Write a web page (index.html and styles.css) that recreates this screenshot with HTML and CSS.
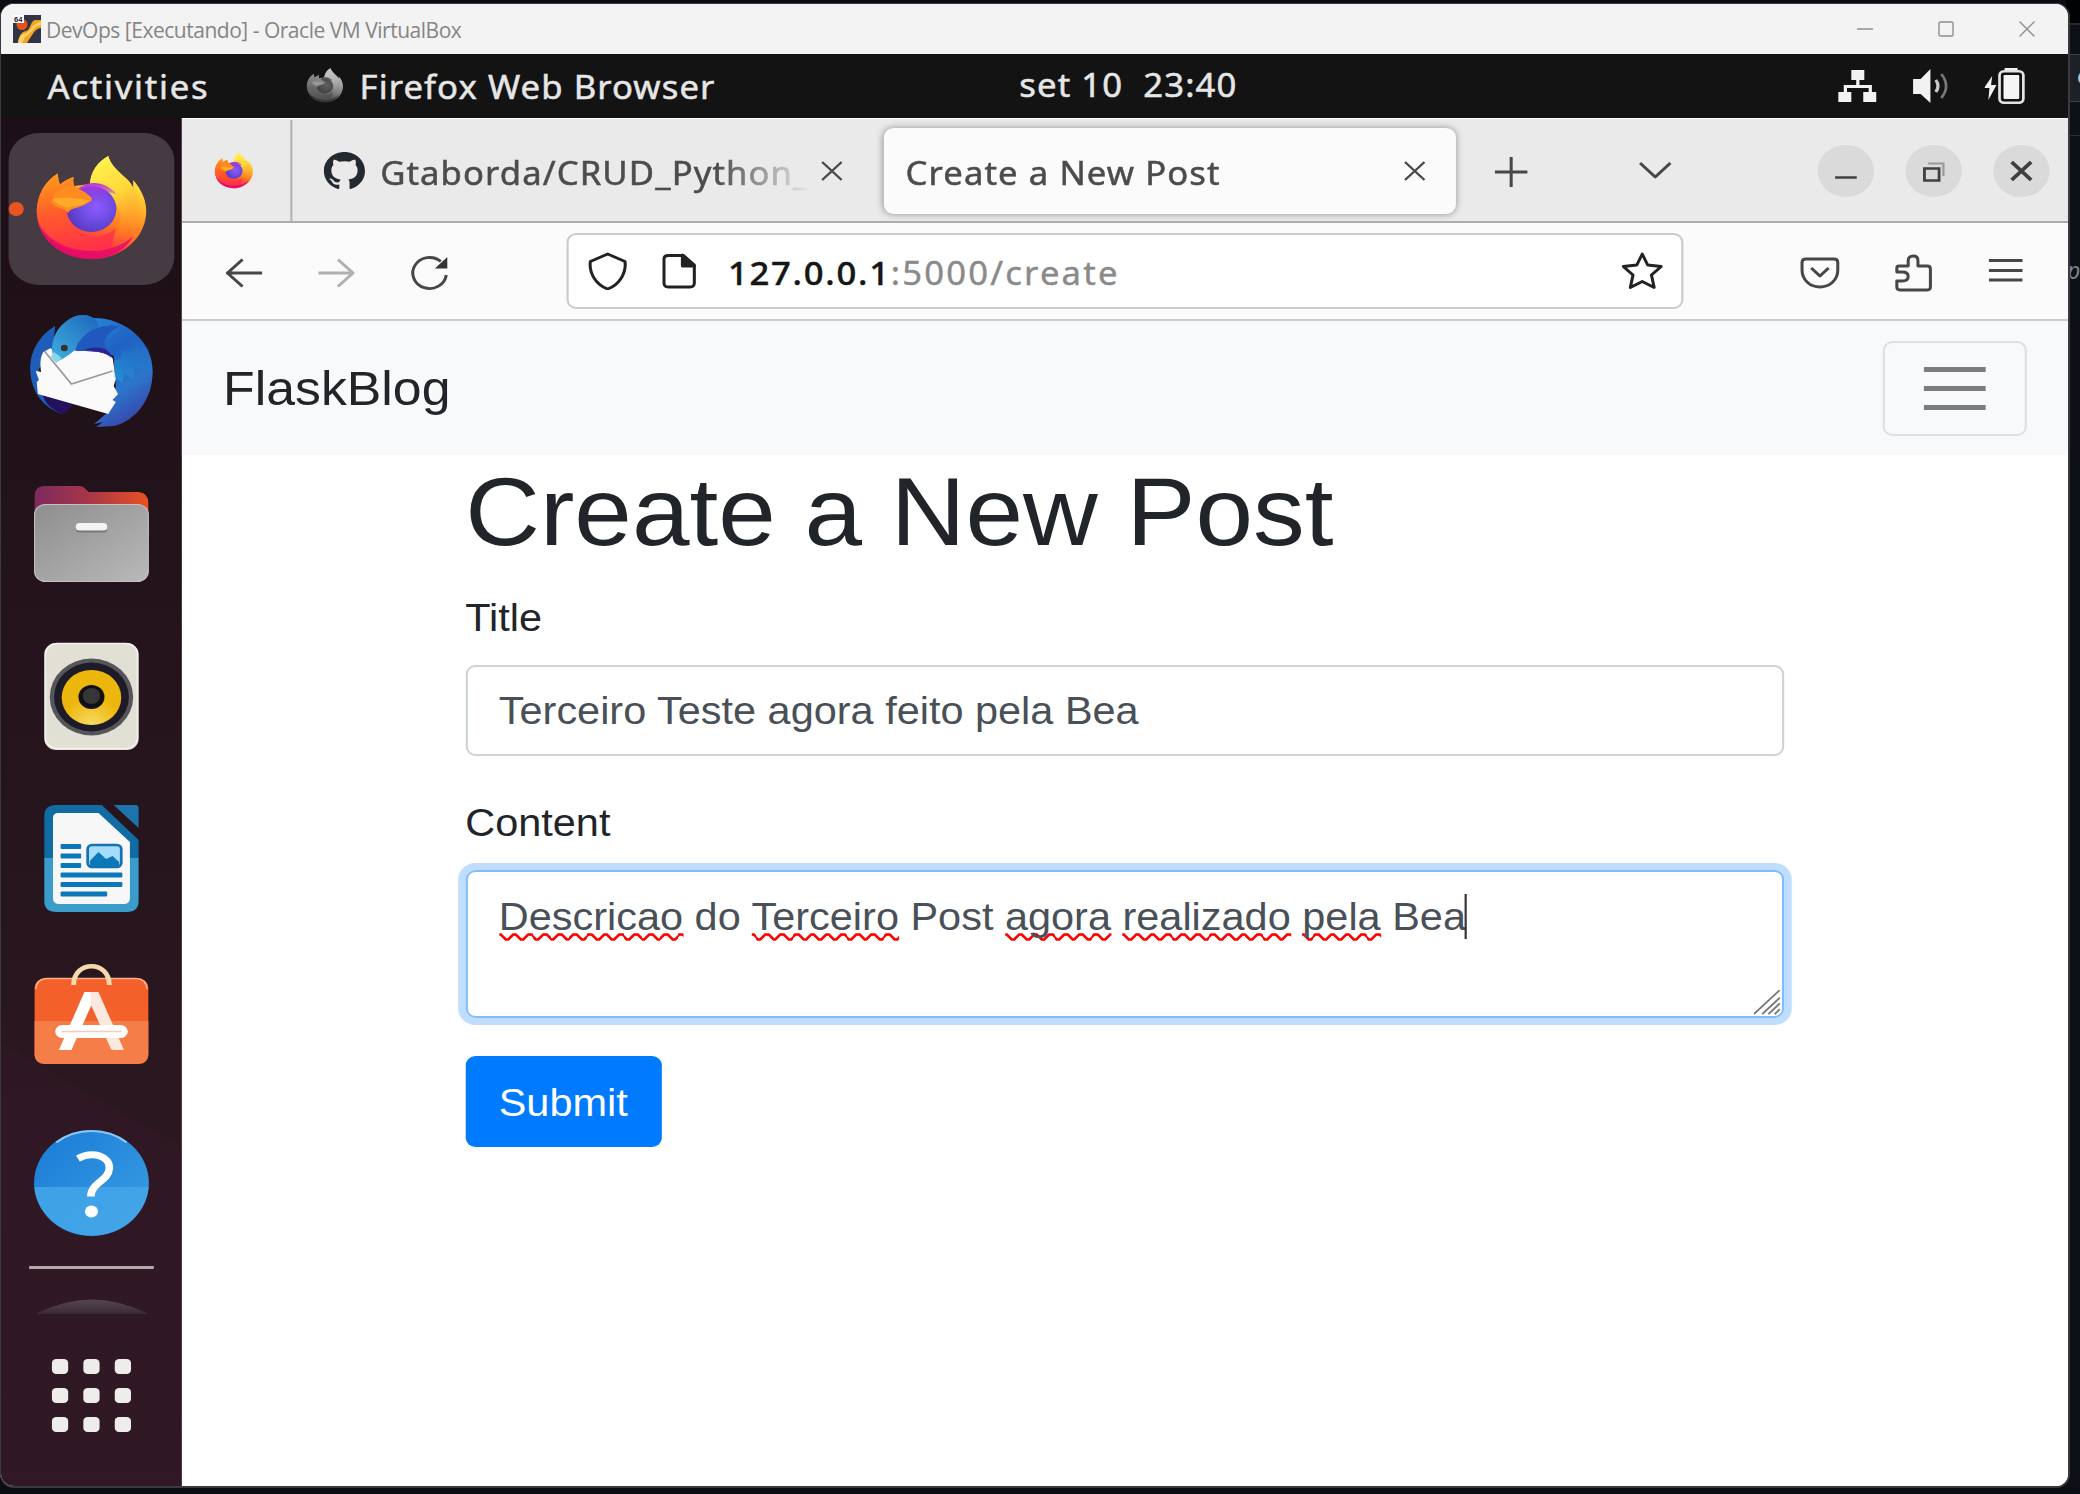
FILE: index.html
```html
<!DOCTYPE html>
<html lang="pt-BR">
<head>
<meta charset="utf-8">
<title>DevOps [Executando] - Oracle VM VirtualBox</title>
<link rel="stylesheet" href="styles.css">
</head>
<body>
<svg class="defs" aria-hidden="true">
  <defs>
    <linearGradient id="fxBody" x1="0.75" y1="0.1" x2="0.35" y2="1"><stop offset="0" stop-color="#fff44f"/><stop offset=".3" stop-color="#ffb52b"/><stop offset=".55" stop-color="#ff7a22"/><stop offset=".78" stop-color="#ff3a45"/><stop offset="1" stop-color="#f0155c"/></linearGradient>
    <linearGradient id="fxLeft" x1="0.3" y1="0" x2="0.5" y2="1"><stop offset="0" stop-color="#ff9a1a"/><stop offset=".5" stop-color="#ff5a2c"/><stop offset="1" stop-color="#ff3148"/></linearGradient>
    <linearGradient id="fxFlame" x1="0.3" y1="0" x2="0.6" y2="1"><stop offset="0" stop-color="#fff44f"/><stop offset=".5" stop-color="#ffd53a"/><stop offset="1" stop-color="#ff8a24" stop-opacity=".1"/></linearGradient>
    <radialGradient id="fxGlobe" cx=".6" cy=".45" r=".65"><stop offset="0" stop-color="#9059ff"/><stop offset=".55" stop-color="#6a4be0"/><stop offset="1" stop-color="#5b34b8"/></radialGradient>
    <linearGradient id="fxGlobeTop" x1="0" y1="0" x2="0" y2="1"><stop offset="0" stop-color="#b833e1"/><stop offset=".6" stop-color="#a13be8" stop-opacity="0"/></linearGradient>
    <symbol id="firefox" viewBox="0 0 115 115">
      <path fill="url(#fxBody)" d="M7 60C7 42 15 29 26.500 21.500C26.500 25 27 29 28.500 32.500C32 29.500 36 26.500 41 25C40.500 28 40.500 31 41.500 34L56 32C57 20 63 10 73 4C75 13 83 20 91 28C93 30 95 33 96 36L96 28C104 38 109 50 108 62C106 88 84 107 58 107C29 107 7 86 7 60Z"/>
      <path fill="#e2066c" opacity=".75" d="M9 73C19 91 36 99 57 99C75 99 88 92 96 84C88 100 74 107 58 107C35 107 15 94 9 73Z"/>
      <path fill="url(#fxLeft)" d="M7 58C8 42 15 29 26.500 21.500C26.500 25 27 29 28.500 32.500C32 29.500 36 26.500 41 25C40.500 28 40.500 31 41.500 34L57 44L57 49C52 56 38 57 37 62L40 76C52 88 70 86 80 76L76 95C70 98 64 99 57 99C30 97 7 82 7 58Z"/>
      <path fill="url(#fxFlame)" d="M56 34C56 20 63 10 73 4C75 13 83 20 91 28C101 40 104 56 98 71C93 81 86 85 78 85C85 76 87 62 79 50C75 42 67 36 56 34Z"/>
      <circle cx="57.500" cy="57" r="23" fill="url(#fxGlobe)"/>
      <path fill="url(#fxGlobeTop)" d="M40 44C48 27 70 27 81 43C77 40 73 40 71 41C77 46 80 54 79 62L42 62Z"/>
      <path fill="#ff8c1e" d="M20 50C26 32 40 29 57 45C59 48 57 50 54 51C49 56 38 55 36 61C34 56 25 57 20 50Z"/>
      <path fill="#ffae2a" opacity=".9" d="M22 47C33 44 45 47 56 48C49 55 40 53 36 56C30 54 25 52 22 47Z"/>
    </symbol>
  </defs>
</svg>

<div class="desktop">
  <aside class="behind"><i class="strip-top"></i><i class="strip-tab"></i><i class="strip-bar"><b></b></i><i class="strip-tools"></i><span>p</span></aside>
  <main class="window">
    <header class="titlebar">
      <svg class="vb-icon" viewBox="0 0 28 28"><rect width="28" height="28" fill="#2f3546"/><path d="M5 28C6 21 8 17 13 16C18 15 17 6 22 5L28 5V13C21 14 20 20 17 23L14 28Z" fill="#f6a21c"/><path d="M5 28C6 22 8 19 13 18C18 17 18 8 28 7L28 10C19 12 18 20 12 22L9 28Z" fill="#ffd36a"/><circle cx="9" cy="9.500" r="5.500" fill="#e5521d"/><rect width="11" height="8" fill="#fff"/><text x="1" y="7" font-size="7.500" font-weight="700" font-family="Liberation Sans, sans-serif" fill="#222">64</text></svg>
      <span class="window-title">DevOps [Executando] - Oracle VM VirtualBox</span>
      <div class="window-buttons">
        <svg viewBox="0 0 16 16"><path d="M0 8H16"/></svg>
        <svg viewBox="0 0 16 16"><rect x="1" y="1" width="14" height="14" rx="1.500"/></svg>
        <svg viewBox="0 0 16 16"><path d="M.5.5L15.500 15.500M15.500.5L.5 15.500"/></svg>
      </div>
    </header>

    <div class="guest-frame"><div class="guest">
      <div class="topbar">
        <span class="activities">Activities</span>
        <svg class="app-icon"><use href="#firefox"/></svg>
        <span class="app-name">Firefox Web Browser</span>
        <span class="clock">set 10&nbsp; 23:40</span>
        <div class="status">
          <svg viewBox="0 0 38 38"><path d="M13 3h12v10h-4.500v5H32v7h4v10H24V25h5v-4H9v4h4v10H1V25h5v-7h11.500v-5H13z" fill="#f2f2f2"/></svg>
          <svg viewBox="0 0 38 38"><path d="M2 12h7L18 2v34L9 27H2z" fill="#f2f2f2"/><path d="M23 13q4 6 0 12" fill="none" stroke="#c8c8c8" stroke-width="3"/><path d="M28 7q9 12 0 24" fill="none" stroke="#777" stroke-width="2.500"/></svg>
          <svg viewBox="0 0 38 38"><path d="M7 9L-.5 21h5l-1 12L11 18H6z" fill="#f2f2f2"/><path d="M18.500 1h12v4h-12z" fill="#f2f2f2"/><rect x="13.800" y="4.300" width="22" height="31.500" rx="4" fill="none" stroke="#e4e4e4" stroke-width="2.500"/><rect x="17.500" y="8" width="14.500" height="24" rx="1" fill="#f5f5f5"/></svg>
        </div>
      </div>

      <div class="workspace">
        <nav class="dock">
          <div class="dock-item active"><svg><use href="#firefox"/></svg></div>
          <div class="dock-item">
            <svg viewBox="0 0 115 115">
              <defs><linearGradient id="tb" x1=".2" y1="0" x2=".8" y2="1"><stop offset="0" stop-color="#2a8fd8"/><stop offset=".4" stop-color="#1f62c4"/><stop offset=".7" stop-color="#2b76cc"/><stop offset="1" stop-color="#3a3fa6"/></linearGradient><linearGradient id="tbh" x1="1" y1="0" x2="0" y2="1"><stop offset="0" stop-color="#1d66bb"/><stop offset="1" stop-color="#3fb0e0"/></linearGradient><linearGradient id="tbf" x1="1" y1="0" x2="0" y2="1"><stop offset="0" stop-color="#2273cc" stop-opacity="0"/><stop offset="1" stop-color="#239bd6" stop-opacity=".8"/></linearGradient></defs>
              <path d="M24 12C8 22 0 40 1 57C2 78 13 94 31 100L12 80L9 55L22 34Z" fill="#1e5db8"/>
              <path d="M12 80L42 87L35 98L31 100C21 96 15 90 12 80Z" fill="#25105e"/>
              <path d="M45 3C30 7 22 18 22 34C36 40 60 32 78 42L80 72L76 95L60 110L68 108L62 113L78 112C98 107 114 86 114 57C114 27 88 3 58 4Q50 2 45 3Z" fill="url(#tb)"/>
              <path d="M13 38C10 44 10 50 11 58L6 57L9 66L7 68L8 80L73 100L80 88L77 86L82 80L78 72L80 65L77 44C70 36 54 38 44 36L24 40L20 34Z" fill="#fafafa"/>
              <path d="M14 37L39 70L77 57" fill="none" stroke="#9a9a9a" stroke-width="1.600"/>
              <path d="M50 1C56 0 70 8 60 17C50 25 44 39 25 48C20 42 19 26 28 14C34 6 42 0 50 1Z" fill="url(#tbh)"/>
              <path d="M20 43L23 38L30 44L25 49Z" fill="#8bd5ea"/><circle cx="32.500" cy="34" r="3.200" fill="#333"/>
              <path d="M43 35C48 18 66 9 84 12C65 22 68 31 76 44C69 36 55 37 43 37Z" fill="#2058bd"/>
              <path d="M50 36C60 32 73 32 77 44C70 37 60 37 50 36Z" fill="#302092"/>
              <path d="M78 47L85 44L86 37L94 38L98 28L102 36L111 31L112 45L104 56L98 52L96 65L88 60L86 69L79 63Z" fill="url(#tbf)"/>
            </svg>
          </div>
          <div class="dock-item">
            <svg viewBox="0 0 115 115">
              <defs><linearGradient id="fl"><stop offset="0" stop-color="#7c2a5e"/><stop offset=".5" stop-color="#a93747"/><stop offset="1" stop-color="#ea5220"/></linearGradient><linearGradient id="fg" x1="0" y1="0" x2="1" y2="1"><stop offset="0" stop-color="#8e8e8e"/><stop offset=".8" stop-color="#b0b0b0"/><stop offset="1" stop-color="#bababa"/></linearGradient></defs>
              <path d="M5 60V20Q5 10 14 10H46Q50 10 52 13L55 16H101Q110 17 110 27V60Z" fill="url(#fl)"/>
              <rect x="5" y="28.500" width="105" height="77" rx="10" fill="url(#fg)" stroke="#c2c2c2" stroke-width="1"/>
              <rect x="43" y="49" width="29" height="7.500" rx="3.500" fill="#777"/><rect x="43" y="47" width="29" height="7.500" rx="3.500" fill="#f4f4f4"/>
            </svg>
          </div>
          <div class="dock-item">
            <svg viewBox="0 0 115 115">
              <defs><radialGradient id="rb" cy="1"><stop offset="0" stop-color="#f9dc64"/><stop offset="1" stop-color="#edb60c"/></radialGradient></defs>
              <rect x="14" y="4" width="87" height="107" rx="11" fill="#e2dfd5"/><rect x="15" y="4.500" width="85" height="105" rx="11" fill="none" stroke="#f3f1ec" stroke-width="1.500"/>
              <circle cx="57.500" cy="58" r="38.500" fill="#56565a"/><circle cx="57.500" cy="58" r="34.500" fill="#1d1b28"/><circle cx="57.500" cy="58.500" r="27.500" fill="url(#rb)"/><circle cx="57.500" cy="58" r="12" fill="#111"/><circle cx="57.500" cy="57" r="8" fill="#363636"/>
            </svg>
          </div>
          <div class="dock-item">
            <svg viewBox="0 0 115 115">
              <path d="M14 58V15Q14 4 25 4H67L101 39V58Z" fill="#116ca3"/><path d="M14 57H101V100Q101 111 90 111H25Q14 111 14 100Z" fill="#3a9ccb"/>
              <path d="M22 17Q22 12 27 12H64L93 41V97Q93 103 87 103H28Q22 103 22 97Z" fill="#f7f7f8"/>
              <path d="M78 4H98Q101 4 101 7V27Z" fill="#1b74ad"/>
              <g fill="#0d78b8"><rect x="29" y="43" width="19" height="5" rx="1"/><rect x="29" y="52.500" width="19" height="5" rx="1"/><rect x="29" y="62" width="19" height="5" rx="1"/><rect x="29" y="71.500" width="57" height="5" rx="1"/><rect x="29" y="81" width="57" height="5" rx="1"/><rect x="29" y="90.500" width="43" height="5" rx="1"/></g>
              <rect x="54" y="44" width="31" height="22" rx="4" fill="#a5dcfa" stroke="#1472ae" stroke-width="2.500"/><path d="M56 64V60L64 51L71 58L77 55L83 61V65H56Z" fill="#0d78b8"/>
            </svg>
          </div>
          <div class="dock-item">
            <svg viewBox="0 0 115 115">
              <rect x="5" y="15" width="105" height="86" rx="10" fill="#f4602a"/><path d="M5 58H110V91Q110 101 100 101H15Q5 101 5 91Z" fill="#f47d48"/><path d="M6 26Q7 16 16 15.500H99Q108 16 109 26" fill="none" stroke="#fab08d" stroke-width="1.500"/>
              <path d="M41 22C41 -3 74 -3 74 22" fill="none" stroke="#f5d9ab" stroke-width="4.500"/>
              <path d="M51 29H57L57.500 42L39 87H27.500Z" fill="#fff"/><path d="M57 29H64L87.500 87H76L57 42Z" fill="#fde8df"/>
              <rect x="24" y="62" width="67" height="13" rx="6.500" fill="#fff"/><path d="M30 68.500H85" stroke="#f9cbb9" stroke-width="1.500"/>
            </svg>
          </div>
          <div class="dock-item">
            <svg viewBox="0 0 115 115">
              <defs><linearGradient id="hp" x1="0" y1="0" x2="1" y2="1"><stop offset="0" stop-color="#1a7bd6"/><stop offset="1" stop-color="#3b9fe4"/></linearGradient></defs>
              <circle cx="57.500" cy="57" r="53" fill="url(#hp)"/><path d="M4.700 61H110.300A53 53 0 0 1 4.700 61Z" fill="#46a8e8" opacity=".8"/><path d="M25 16.500A52 52 0 0 1 90 16.500" fill="none" stroke="#8cc4f4" stroke-width="2"/>
              <path d="M45 32.500C59 24.500 75 30.500 74 42.500C73 55.500 57 56.500 57 70.500" fill="none" stroke="#fff" stroke-width="7"/><circle cx="57.500" cy="85.500" r="6" fill="#fff"/>
            </svg>
          </div>
          <div class="dock-line"></div>
          <svg class="dock-more" viewBox="0 0 104 15"><defs><linearGradient id="fd" x2="0" y2="1"><stop offset="0" stop-color="#564650"/><stop offset="1" stop-color="#392a33"/></linearGradient></defs><path d="M0 15Q52 -14 104 15Z" fill="url(#fd)"/></svg>
          <div class="apps"><i></i><i></i><i></i><i></i><i></i><i></i><i></i><i></i><i></i></div>
        </nav>

        <section class="browser">
          <div class="tabs">
            <div class="tab-pinned"><svg><use href="#firefox"/></svg></div>
            <div class="tab">
              <svg class="github" viewBox="0 0 16 16"><path fill="#24292f" d="M8 0C3.580 0 0 3.580 0 8c0 3.540 2.290 6.530 5.470 7.590.4.070.55-.17.55-.38 0-.19-.01-.82-.01-1.490-2.010.37-2.530-.49-2.690-.94-.09-.23-.48-.94-.82-1.130-.28-.15-.68-.52-.01-.53.63-.01 1.080.58 1.230.82.72 1.210 1.870.87 2.330.66.07-.52.28-.87.51-1.070-1.780-.2-3.640-.89-3.640-3.950 0-.87.31-1.590.82-2.150-.08-.2-.36-1.020.08-2.120 0 0 .67-.21 2.200.82.64-.18 1.320-.27 2-.27s1.360.09 2 .27c1.530-1.040 2.200-.82 2.200-.82.44 1.100.16 1.920.08 2.120.51.56.82 1.270.82 2.150 0 3.070-1.870 3.750-3.650 3.950.29.25.54.73.54 1.480 0 1.070-.01 1.930-.01 2.200 0 .21.15.46.55.38A8.010 8.010 0 0 0 16 8c0-4.420-3.580-8-8-8z"/></svg>
              <span class="tab-text faded">Gtaborda/CRUD_Python_</span>
              <svg class="close" viewBox="0 0 20 20"><path d="M1 1L19 19M19 1L1 19"/></svg>
            </div>
            <div class="tab current">
              <span class="tab-text">Create a New Post</span>
              <svg class="close" viewBox="0 0 20 20"><path d="M1 1L19 19M19 1L1 19"/></svg>
            </div>
            <svg class="icon plus" viewBox="0 0 38 38"><path d="M4 20H34M19 5V35"/></svg>
            <svg class="icon chevron" viewBox="0 0 38 38"><path d="M5 11L19 25L33 11"/></svg>
            <div class="controls">
              <span><svg viewBox="0 0 52 52"><path d="M16 32.500H36"/></svg></span>
              <span><svg viewBox="0 0 52 52"><path d="M17.500 23.500H31V35.500H17.500Z"/><path class="light" d="M21 18.500H35V31"/></svg></span>
              <span><svg viewBox="0 0 52 52"><path d="M17 17L35 35M35 17L17 35" stroke-width="3.600"/></svg></span>
            </div>
          </div>

          <div class="toolbar">
            <svg class="icon" viewBox="0 0 38 38"><path d="M36 19H4M18 5.500L4 19L18 32.500"/></svg>
            <svg class="icon off" viewBox="0 0 38 38"><path d="M2 19H34M20 5.500L34 19L20 32.500"/></svg>
            <svg class="icon" viewBox="0 0 38 38"><path d="M34 21A15.500 15.500 0 1 1 29 7.500"/><path d="M35 3V14.500H23.500Z" fill="#333" stroke="none"/></svg>
            <div class="urlbar">
              <svg class="icon dark" viewBox="0 0 38 38"><path d="M19 2L35 9.500C36.500 22 29 33 19 37C9 33 1.500 22 3 9.500Z"/></svg>
              <svg class="icon dark" viewBox="0 0 38 38"><path d="M9 3.500H23L33 13V31Q33 35 29 35H9Q5 35 5 31V7Q5 3.500 9 3.500Z"/><path d="M22 3V14H33Z" fill="#222"/></svg>
              <span class="address"><b>127.0.0.1</b>:5000/create</span>
              <svg class="icon dark star" viewBox="0 0 38 38"><path d="M19 2L24 13L36.500 14.500L27.500 23L30 35.500L19 29.500L8 35.500L10.500 23L1.500 14.500L14 13Z"/></svg>
            </div>
            <svg class="icon pocket" viewBox="0 0 38 38"><path d="M6 5H32Q35.500 5 35.500 8.500V16C35.500 26 28 33 19 33C10 33 2.500 26 2.500 16V8.500Q2.500 5 6 5Z"/><path d="M11 14L19 22L27 14"/></svg>
            <svg class="icon" viewBox="0 0 38 38"><path d="M6 12H14.500V6.500Q14.500 2 19 2Q23.500 2 23.500 6.500V12H32Q35 12 35 15V33Q35 36 32 36H7Q4 36 4 33V27H9Q14.500 27 14.500 22.500Q14.500 18 9 18H4V14Q4 12 6 12Z"/></svg>
            <svg class="icon" viewBox="0 0 38 38"><path d="M3 6.500H34M3 16.500H34M3 26H34"/></svg>
          </div>

          <div class="page">
            <div class="navbar">
              <span class="brand">FlaskBlog</span>
              <button class="toggler" type="button" aria-label="Menu"><i></i><i></i><i></i></button>
            </div>
            <form class="container">
              <h1>Create a New Post</h1>
              <label>Title</label>
              <div class="field">Terceiro Teste agora feito pela Bea</div>
              <label>Content</label>
              <div class="field area"><u>Descricao</u> do <u>Terceiro</u> Post <u>agora</u> <u>realizado</u> <u>pela</u> Bea<i class="caret"></i>
                <svg class="grip" viewBox="0 0 26 26"><path d="M0 25L25 0M8 25L25 8M14 25L25 14M20 25L25 20"/></svg>
              </div>
              <button class="submit" type="button">Submit</button>
            </form>
          </div>
        </section>
      </div>
    </div></div>
  </main>
</div>
</body>
</html>
```

FILE: styles.css
```css
* { box-sizing: border-box; }
body { margin: 0; background: #0b0d12; }
svg { display: block; flex: none; }
.defs { position: absolute; width: 0; height: 0; }

.desktop {
  position: relative;
  width: 2080px;
  height: 1494px;
  overflow: hidden;
  background: #0b0d12;
  padding: 3px 0 0 0;
}

/* sliver of the application behind the window */
.behind {
  position: absolute;
  top: 0;
  right: 0;
  width: 14px;
  height: 1488px;
  background: #0d1117;
  overflow: hidden;
}
.behind i { display: block; }
.strip-top { height: 25px; background: #010204; border-bottom: 2px solid #26292e; }
.strip-tab { height: 30px; background: #0d1117; border-bottom: 1px solid #3c3f44; }
.strip-bar { position: relative; height: 47px; background: #1d2127; border-bottom: 1px solid #3c3f44; }
.strip-bar b { position: absolute; left: 12px; top: 16px; width: 14px; height: 14px; border-radius: 50%; background: #8ec5f3; }
.strip-tools { height: 34px; border-bottom: 1px solid #2a2d33; }
.behind span {
  position: absolute;
  left: 1px;
  top: 257px;
  font: italic 23px/26px "Noto Sans", sans-serif;
  color: #7d838b;
}

.window {
  position: relative;
  width: 2070px;
  height: 1485px;
  border: 1px solid #3a3b3e;
  border-width: 1px 2px 2px 1px;
  border-radius: 14px;
  overflow: hidden;
  background: #fff;
}

.titlebar {
  height: 50px;
  background: #f3f3f3;
  display: flex;
  align-items: center;
  padding: 0 33px 0 12px;
}
.vb-icon { width: 28px; height: 28px; }
.window-title {
  margin-left: 5px;
  padding-top: 1px;
  font: 21px/28px "Open Sans", "Noto Sans", sans-serif;
  letter-spacing: -.48px;
  color: #858585;
  white-space: nowrap;
}
.window-buttons { margin-left: auto; display: flex; gap: 65px; }
.window-buttons svg { width: 16px; height: 16px; fill: none; stroke: #8f8f8f; stroke-width: 1.400; }

/* the guest display is stretched horizontally to fill the window */
.guest-frame { width: 2067px; height: 1432px; overflow: hidden; }
.guest {
  width: 1908px;
  height: 1432px;
  transform: scaleX(1.08333);
  transform-origin: 0 0;
  font-family: "Noto Sans", sans-serif;
}

.topbar {
  height: 64px;
  background: #131313;
  color: #e6e6e6;
  display: flex;
  align-items: center;
  font-size: 32px;
  line-height: 44px;
  letter-spacing: 1px;
  white-space: nowrap;
  padding-left: 43px;
  -webkit-text-stroke: .5px;
}
.activities { width: 236px; padding-top: 2px; letter-spacing: 1.600px; }
.app-icon { width: 38px; height: 38px; filter: grayscale(1) brightness(.85); margin: -1px 1px 0; }
.app-name { width: 621px; padding: 2px 0 0 12px; }
.clock { margin-top: -2px; }
.status { margin-left: auto; display: flex; gap: 30px; padding-right: 39px; margin-top: -1px; }
.status svg { width: 38px; height: 38px; }

.workspace { display: flex; height: 1368px; }

.dock {
  width: 167px;
  background:
    linear-gradient(32deg, rgba(60, 26, 44, .25) 30%, transparent 30.2%),
    linear-gradient(#1d0f17, #2a1720 70%, #2c1822);
  padding-top: 10px;
  display: flex;
  flex-direction: column;
  align-items: center;
}
.dock-item { position: relative; width: 153px; height: 152px; margin: 5px 0 5.400px; display: flex; align-items: center; justify-content: center; border-radius: 28px; flex: none; }
.dock-item svg { width: 115px; height: 115px; }
.dock-item.active { background: #473b43; }
.dock-item.active::before {
  content: "";
  position: absolute;
  left: 0;
  top: 69px;
  width: 14px;
  height: 14px;
  border-radius: 50%;
  background: #e95420;
}
.dock-line { width: 115px; height: 3px; background: #b5a9af; margin-top: 1px; flex: none; }
.dock-more { width: 104px; height: 15px; margin-top: 30px; }
.apps { display: grid; grid-template-columns: repeat(3, 15px); grid-auto-rows: 15px; gap: 14px; margin-top: 45px; }
.apps i { background: #eeedec; border-radius: 4px; }

.browser { width: 1741px; background: #fff; }

.tabs {
  height: 105px;
  display: flex;
  align-items: center;
  background: #eaeaea;
  border-top: 1px solid #fafafa;
  border-bottom: 2px solid #adadad;
  color: #4c4c4c;
  padding-top: 1px;
}
.tab-pinned { width: 102px; height: 102px; border-right: 2px solid #b5b5b5; display: flex; align-items: center; justify-content: center; }
.tab-pinned svg { width: 40px; height: 40px; margin-right: 4px; }
.tab { width: 546px; height: 86px; display: flex; align-items: center; padding-left: 29px; }
.github { width: 38px; height: 38px; margin-right: 14px; }
.tab-text { font-size: 32px; line-height: 44px; letter-spacing: 1px; white-space: nowrap; padding-top: 4px; -webkit-text-stroke: .5px; }
.faded { width: 397px; margin-right: 10px; overflow: hidden; -webkit-mask-image: linear-gradient(90deg, #000 78%, transparent); mask-image: linear-gradient(90deg, #000 78%, transparent); }
.close { width: 20px; height: 20px; stroke: #4a4a4a; stroke-width: 2.200; fill: none; }
.tab.current { width: 528px; padding: 0 28px 0 20px; background: #fbfbfb; border-radius: 9px; box-shadow: 0 0 7px rgba(0, 0, 0, .38); }
.current .close { margin-left: auto; }
.icon { width: 38px; height: 38px; fill: none; stroke: #474747; stroke-width: 2.800; stroke-linejoin: round; }
.plus { margin-left: 32px; }
.chevron { margin-left: 95px; }
.controls { margin-left: auto; padding-right: 17px; display: flex; gap: 29px; }
.controls span { width: 52px; height: 52px; border-radius: 50%; background: #dadada; }
.controls svg { width: 52px; height: 52px; fill: none; stroke: #404040; stroke-width: 2.600; }
.controls .light { stroke: #999; stroke-width: 2; }

.toolbar {
  height: 98px;
  display: flex;
  align-items: center;
  background: #fbfbfb;
  border-bottom: 2px solid #cdcdcd;
  padding-left: 38px;
  gap: 48px;
}
.toolbar > .icon { margin-top: 3px; }
.icon.off { stroke: #b0b0b0; }
.icon.dark { stroke: #222; }
.urlbar {
  width: 1031px;
  height: 76px;
  margin-left: 59px;
  background: #fff;
  border: 2px solid #cbcbcb;
  border-radius: 9px;
  display: flex;
  align-items: center;
  padding: 0 17px;
  gap: 28px;
}
.address { font-size: 32px; line-height: 44px; letter-spacing: 2px; color: #8a8a8a; padding-top: 3px; white-space: nowrap; margin-left: -2px; -webkit-text-stroke: .4px; }
.address b { font-weight: 500; color: #161616; letter-spacing: 1.600px; }
.star { margin-left: auto; }
.pocket { margin-left: 59px; }

.page { font-family: "Liberation Sans", Arial, sans-serif; color: #212529; }
.navbar { height: 134px; background: #f8f9fa; display: flex; align-items: center; justify-content: space-between; padding: 0 38px; }
.brand { font-size: 47.800px; line-height: 72px; padding-top: 1px; }
.toggler {
  width: 133px;
  height: 95px;
  background: transparent;
  border: 2px solid #dfe0e1;
  border-radius: 9px;
  display: flex;
  flex-direction: column;
  align-items: center;
  justify-content: center;
  gap: 14px;
  padding: 0 1px 0 0;
}
.toggler i { width: 57px; height: 5px; background: #7b7c7d; }

.container { width: 1217px; margin: 0 0 0 261.500px; font-size: 38.280px; line-height: 57.600px; }
h1 { margin: 0 0 19px; font-size: 95.500px; line-height: 115px; font-weight: 400; }
label { display: block; margin-bottom: 18px; }
.field { height: 91px; border: 2px solid #ced4da; border-radius: 9px; padding: 15px 29px; color: #495057; margin-bottom: 38px; white-space: nowrap; }
.area { position: relative; height: 148px; margin-top: 19px; border-color: #80bdff; box-shadow: 0 0 0 7px #bfdeff; padding-top: 16px; }
.area u {
  text-decoration: none;
  padding-bottom: 3px;
  background: url("data:image/svg+xml,%3Csvg xmlns='http://www.w3.org/2000/svg' width='14' height='8'%3E%3Cpath d='M-3 4L0 1.500H1.500L6 6.500H8L12.500 1.500H14L17 4' fill='none' stroke='%23f00' stroke-width='2.500'/%3E%3C/svg%3E") repeat-x left bottom;
}
.caret { display: inline-block; width: 2px; height: 45px; background: #333; vertical-align: -9px; margin-left: -1px; }
.grip { position: absolute; right: 1px; bottom: 1px; width: 25px; height: 25px; fill: none; stroke: #777; stroke-width: 1.800; }
.submit { display: block; width: 181px; height: 91px; border: 0; border-radius: 9px; background: #007bff; color: #fff; font: 38.280px/57px "Liberation Sans", Arial, sans-serif; padding: 2px 0 0; }
```
